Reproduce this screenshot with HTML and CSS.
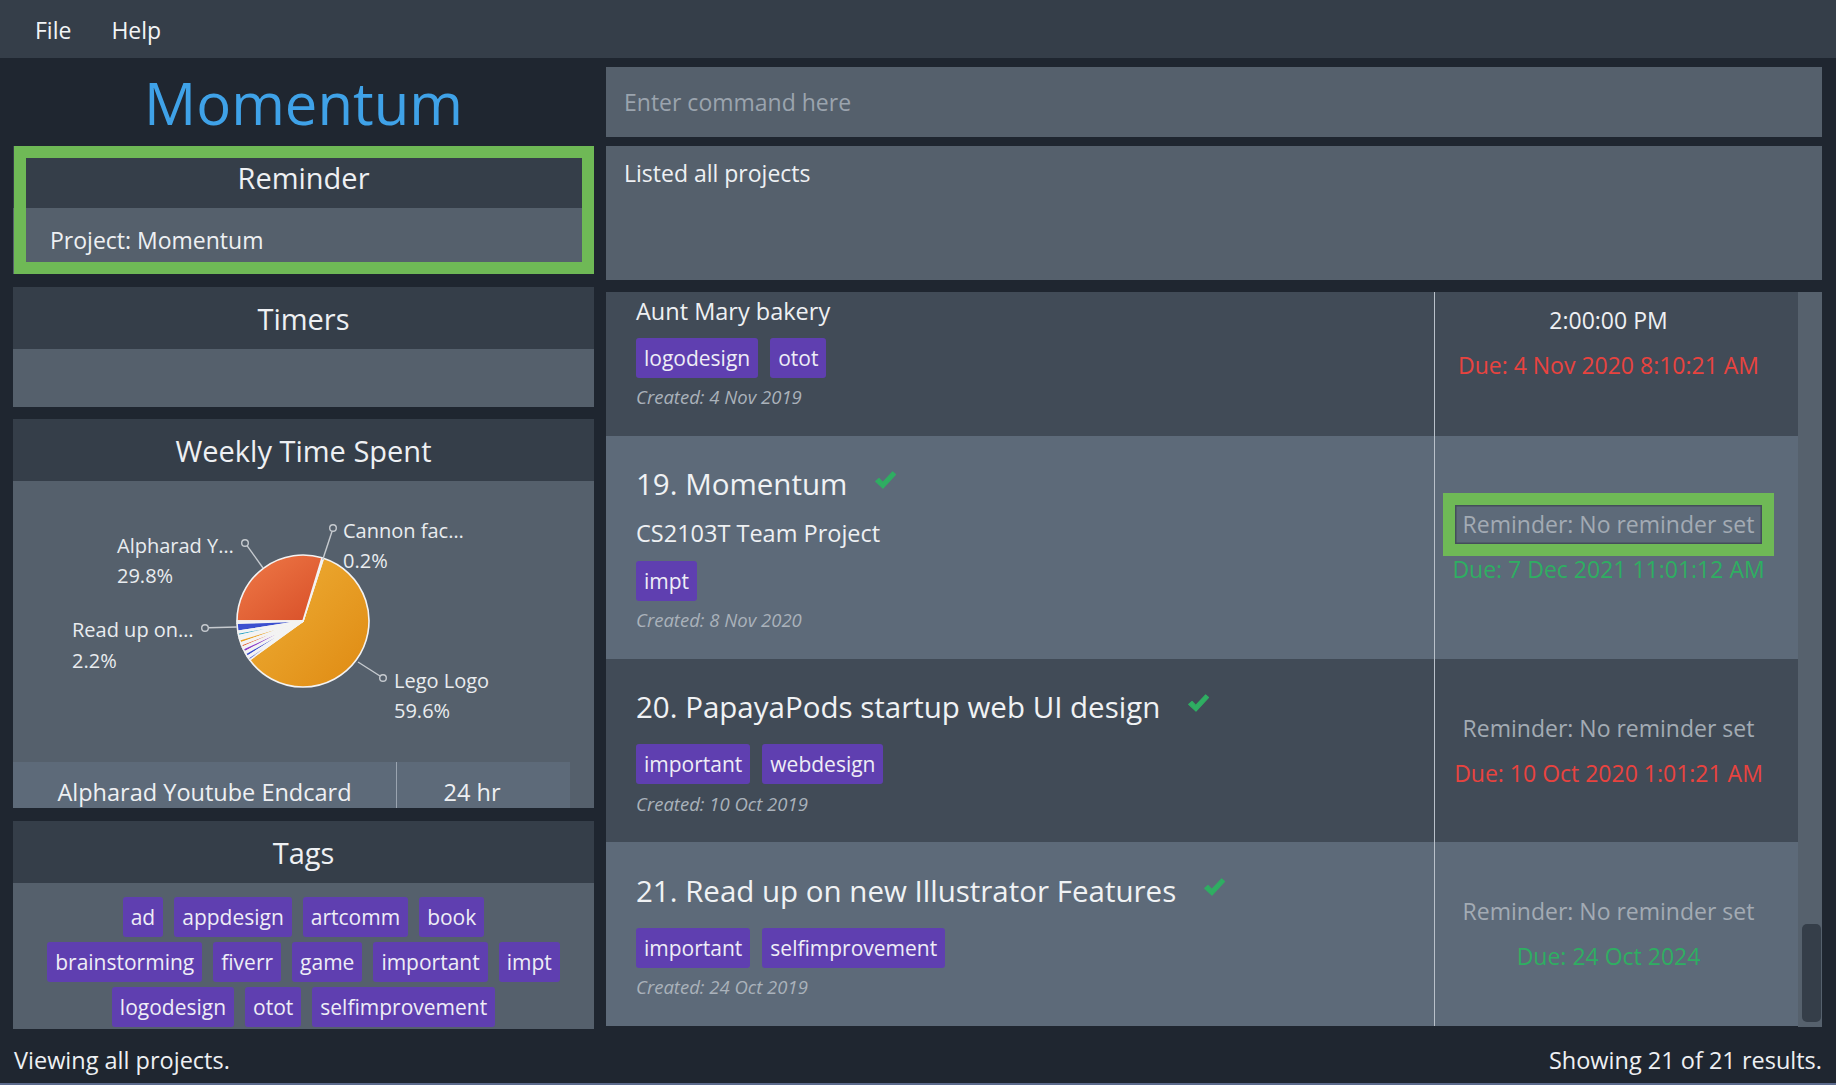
FILE: index.html
```html
<!DOCTYPE html>
<html lang="en">
<head>
<meta charset="utf-8">
<title>Momentum</title>
<link rel="stylesheet" href="styles.css">
</head>
<body>
<div class="app">
  <div class="menubar">
    <span class="menu-item">File</span>
    <span class="menu-item">Help</span>
  </div>

  <div class="main">
    <div class="left">
      <div class="brand">Momentum</div>

      <section class="panel panel-reminder">
        <div class="panel-head">Reminder</div>
        <div class="panel-body reminder-body">Project: Momentum</div>
      </section>

      <section class="panel panel-timers">
        <div class="panel-head">Timers</div>
        <div class="panel-body"></div>
      </section>

      <section class="panel panel-weekly">
        <div class="panel-head">Weekly Time Spent</div>
        <div class="panel-body weekly-body">
          <svg class="pie" width="581" height="281" viewBox="0 0 581 281">
            <defs>
              <linearGradient id="gRed" x1="0" y1="0" x2="1" y2="1">
                <stop offset="0" stop-color="#ef7a48"/>
                <stop offset="1" stop-color="#d84f28"/>
              </linearGradient>
              <linearGradient id="gYel" x1="0" y1="0" x2="1" y2="1">
                <stop offset="0" stop-color="#efb038"/>
                <stop offset="1" stop-color="#df8a12"/>
              </linearGradient>
            </defs>
            <g stroke="#f3f3f3" stroke-width="1.6" stroke-linejoin="round">
              <path fill="url(#gYel)" d="M290 140 L236.60 178.79 A66 66 0 1 0 310.39 77.23 Z"/>
              <path fill="#74c291" d="M290 140 L310.39 77.23 A66 66 0 0 0 309.07 76.82 Z"/>
              <path fill="url(#gRed)" d="M290 140 L309.07 76.82 A66 66 0 0 0 224 140 Z"/>
              <path fill="#dfe3ea" d="M290 140 L224 140 A66 66 0 0 0 224.04 142.30 Z"/>
              <path fill="#3b4fcf" d="M290 140 L224.04 142.30 A66 66 0 0 0 224.81 150.32 Z"/>
              <path fill="#e6e9f2" d="M290 140 L224.81 150.32 A66 66 0 0 0 225.11 152.03 Z"/>
              <path fill="#2ba3c4" d="M290 140 L225.11 152.03 A66 66 0 0 0 225.69 154.85 Z"/>
              <path fill="#dcefef" d="M290 140 L225.69 154.85 A66 66 0 0 0 226.25 157.08 Z"/>
              <path fill="#f1e1b2" d="M290 140 L226.25 157.08 A66 66 0 0 0 226.72 158.75 Z"/>
              <path fill="#e9a021" d="M290 140 L226.72 158.75 A66 66 0 0 0 227.79 162.03 Z"/>
              <path fill="#efe6e0" d="M290 140 L227.79 162.03 A66 66 0 0 0 228.38 163.65 Z"/>
              <path fill="#e05a2b" d="M290 140 L228.38 163.65 A66 66 0 0 0 229.47 166.32 Z"/>
              <path fill="#ece2f0" d="M290 140 L229.47 166.32 A66 66 0 0 0 230.18 167.89 Z"/>
              <path fill="#8a3ac8" d="M290 140 L230.18 167.89 A66 66 0 0 0 231.73 170.99 Z"/>
              <path fill="#d8cdee" d="M290 140 L231.73 170.99 A66 66 0 0 0 232.56 172.50 Z"/>
              <path fill="#3a4ccc" d="M290 140 L232.56 172.50 A66 66 0 0 0 234.34 175.46 Z"/>
              <path fill="#e2e5f0" d="M290 140 L234.34 175.46 A66 66 0 0 0 235.28 176.91 Z"/>
              <path fill="#4256d2" d="M290 140 L235.28 176.91 A66 66 0 0 0 236.60 178.79 Z"/>
            </g>
            <g class="pie-leaders" fill="none" stroke="#c6cacf" stroke-width="1.4">
              <line x1="309.6" y1="79" x2="319" y2="50.5"/>
              <circle cx="320" cy="47" r="3.3"/>
              <line x1="250" y1="87" x2="234.2" y2="64.8"/>
              <circle cx="232" cy="62" r="3.3"/>
              <line x1="224" y1="146" x2="195.6" y2="146.8"/>
              <circle cx="192" cy="147" r="3.3"/>
              <line x1="345" y1="181" x2="367" y2="195"/>
              <circle cx="370" cy="197" r="3.3"/>
            </g>
            <g class="pie-labels" fill="#e9ecef" font-size="20">
              <text x="330" y="57">Cannon fac…</text>
              <text x="330" y="87">0.2%</text>
              <text x="104" y="72">Alpharad Y…</text>
              <text x="104" y="102">29.8%</text>
              <text x="59" y="156">Read up on…</text>
              <text x="59" y="187">2.2%</text>
              <text x="381" y="207">Lego Logo</text>
              <text x="381" y="237">59.6%</text>
            </g>
          </svg>
          <div class="time-table">
            <div class="tt-row">
              <div class="tt-name">Alpharad Youtube Endcard</div>
              <div class="tt-time">24 hr</div>
            </div>
          </div>
        </div>
      </section>

      <section class="panel panel-tags">
        <div class="panel-head">Tags</div>
        <div class="panel-body tags-body">
          <span class="tag">ad</span>
          <span class="tag">appdesign</span>
          <span class="tag">artcomm</span>
          <span class="tag">book</span>
          <span class="tag">brainstorming</span>
          <span class="tag">fiverr</span>
          <span class="tag">game</span>
          <span class="tag">important</span>
          <span class="tag">impt</span>
          <span class="tag">logodesign</span>
          <span class="tag">otot</span>
          <span class="tag">selfimprovement</span>
        </div>
      </section>
    </div>

    <div class="right">
      <div class="command">Enter command here</div>
      <div class="result">Listed all projects</div>
      <div class="list">
        <div class="cells">
          <div class="cells-inner">
            <div class="cell dark">
              <div class="cell-main">
                <div class="title-row"></div>
                <div class="desc">Aunt Mary bakery</div>
                <div class="tags-row"><span class="tag">logodesign</span><span class="tag">otot</span></div>
                <div class="created">Created: 4 Nov 2019</div>
              </div>
              <div class="cell-side side-wrapped">
                <div class="side-line side-spacer"></div>
                <div class="side-line reminder-set">2:00:00 PM</div>
                <div class="side-line due-over">Due: 4 Nov 2020 8:10:21 AM</div>
              </div>
            </div>

            <div class="cell light">
              <div class="cell-main">
                <div class="title-row"><span class="title">19. Momentum</span><svg class="check" width="23" height="20" viewBox="0 0 21 18"><path d="M1.5 10.2 L4.6 7.6 L8 11.2 L17 1.6 L19.6 4 L8.2 16.4 Z"/></svg></div>
                <div class="desc">CS2103T Team Project</div>
                <div class="tags-row"><span class="tag">impt</span></div>
                <div class="created">Created: 8 Nov 2020</div>
              </div>
              <div class="cell-side">
                <div class="side-line reminder-none highlight">Reminder: No reminder set</div>
                <div class="side-line due-ok">Due: 7 Dec 2021 11:01:12 AM</div>
              </div>
            </div>

            <div class="cell dark">
              <div class="cell-main">
                <div class="title-row"><span class="title">20. PapayaPods startup web UI design</span><svg class="check" width="23" height="20" viewBox="0 0 21 18"><path d="M1.5 10.2 L4.6 7.6 L8 11.2 L17 1.6 L19.6 4 L8.2 16.4 Z"/></svg></div>
                <div class="tags-row"><span class="tag">important</span><span class="tag">webdesign</span></div>
                <div class="created">Created: 10 Oct 2019</div>
              </div>
              <div class="cell-side">
                <div class="side-line reminder-none">Reminder: No reminder set</div>
                <div class="side-line due-over">Due: 10 Oct 2020 1:01:21 AM</div>
              </div>
            </div>

            <div class="cell light">
              <div class="cell-main">
                <div class="title-row"><span class="title">21. Read up on new Illustrator Features</span><svg class="check" width="23" height="20" viewBox="0 0 21 18"><path d="M1.5 10.2 L4.6 7.6 L8 11.2 L17 1.6 L19.6 4 L8.2 16.4 Z"/></svg></div>
                <div class="tags-row"><span class="tag">important</span><span class="tag">selfimprovement</span></div>
                <div class="created">Created: 24 Oct 2019</div>
              </div>
              <div class="cell-side">
                <div class="side-line reminder-none">Reminder: No reminder set</div>
                <div class="side-line due-ok">Due: 24 Oct 2024</div>
              </div>
            </div>
          </div>
        </div>
        <div class="scrollbar"><div class="thumb"></div></div>
      </div>
    </div>
  </div>

  <div class="statusbar">
    <span>Viewing all projects.</span>
    <span>Showing 21 of 21 results.</span>
  </div>
</div>
</body>
</html>
```

FILE: styles.css
```css
* {
  box-sizing: border-box;
  margin: 0;
  padding: 0;
}

html,
body {
  width: 1836px;
  height: 1085px;
  overflow: hidden;
}

body {
  background: #1f2630;
  font-family: "Open Sans", "Noto Sans", sans-serif;
  color: #eef0f3;
}

.app {
  display: flex;
  flex-direction: column;
  height: 1085px;
  border-bottom: 2px solid #5b6a8c;
}

/* ---------- menu bar ---------- */
.menubar {
  height: 58px;
  flex: none;
  background: #353e49;
  display: flex;
  align-items: center;
  gap: 40px;
  padding: 2px 0 0 35px;
  font-size: 23px;
  color: #f2f4f6;
}

/* ---------- main area ---------- */
.main {
  flex: 1;
  min-height: 0;
  display: flex;
  gap: 12px;
  padding: 0 14px 0 13px;
}

.left {
  width: 581px;
  flex: none;
  display: flex;
  flex-direction: column;
}

.brand {
  height: 88px;
  flex: none;
  display: flex;
  align-items: center;
  justify-content: center;
  font-size: 58px;
  color: #3fa2e8;
}

.panel {
  flex: none;
  display: flex;
  flex-direction: column;
  background: #55606c;
  overflow: hidden;
}

.panel-head {
  height: 62px;
  flex: none;
  display: flex;
  align-items: center;
  justify-content: center;
  background: #353e49;
  font-size: 29px;
  color: #eef0f3;
}

.panel-body {
  flex: 1;
  min-height: 0;
}

.panel-reminder {
  height: 128px;
  position: relative;
  overflow: visible;
}

.panel-reminder::after {
  content: "";
  position: absolute;
  left: 1px;
  top: 0;
  right: 0;
  bottom: 0;
  border: 12px solid #6fb956;
}

.reminder-body {
  display: flex;
  align-items: center;
  padding: 0 0 3px 37px;
  font-size: 23px;
}

.panel-timers {
  height: 120px;
  margin-top: 13px;
}

.panel-weekly {
  height: 389px;
  margin-top: 12px;
}

.weekly-body {
  display: flex;
  flex-direction: column;
}

.pie {
  display: block;
  flex: none;
}

.time-table {
  flex: 1;
  min-height: 0;
  width: 557px;
  overflow: hidden;
}

.tt-row {
  height: 60px;
  display: flex;
  background: #5d6a79;
  font-size: 23.5px;
}

.tt-name {
  width: 384px;
  display: flex;
  align-items: center;
  justify-content: center;
  border-right: 1px solid #9aa4b0;
}

.tt-time {
  width: 150px;
  display: flex;
  align-items: center;
  justify-content: center;
}

.panel-tags {
  flex: 1;
  margin-top: 13px;
}

.tags-body {
  display: flex;
  flex-wrap: wrap;
  justify-content: center;
  align-content: flex-start;
  gap: 5px 11px;
  padding: 14px 31px 0;
}

.tag {
  height: 40px;
  display: inline-flex;
  align-items: center;
  padding: 0 8px;
  background: #5f3fb0;
  border-radius: 3px;
  font-size: 21px;
  color: #eeedf6;
  white-space: nowrap;
}

/* ---------- right column ---------- */
.right {
  flex: 1;
  min-width: 0;
  display: flex;
  flex-direction: column;
  padding-top: 9px;
}

.command {
  height: 70px;
  flex: none;
  display: flex;
  align-items: center;
  padding-left: 18px;
  background: #55606c;
  font-size: 23px;
  color: #9ba4ae;
}

.result {
  height: 134px;
  flex: none;
  margin-top: 9px;
  padding: 11px 18px;
  background: #55606c;
  font-size: 23px;
  line-height: 32px;
  color: #eef0f3;
}

.list {
  height: 735px;
  flex: none;
  margin-top: 12px;
  display: flex;
}

.cells {
  flex: 1;
  min-width: 0;
  overflow: hidden;
}

.cells-inner {
  margin-top: -79px;
}

.cell {
  display: flex;
}

.cell.dark {
  background: #414b57;
}

.cell.light {
  background: #5d6a79;
}

.cell-main {
  flex: 1;
  min-width: 0;
  padding: 28.5px 0 26.6px 30px;
}

.title-row {
  height: 40px;
  display: flex;
  align-items: flex-start;
  margin-bottom: 17px;
}

.title {
  font-size: 29.5px;
  line-height: 40px;
  color: #f0f2f4;
  white-space: nowrap;
}

.check {
  margin: 6px 0 0 27px;
  fill: #2fae62;
  stroke: #2fae62;
  stroke-width: 1;
  stroke-linejoin: round;
}

.desc {
  height: 32px;
  margin: -4px 0 11.5px;
  font-size: 23.5px;
  line-height: 32px;
  color: #eef0f3;
}

.tags-row {
  display: flex;
  gap: 12px;
}

.created {
  margin-top: 7.4px;
  font-size: 18.5px;
  line-height: 24px;
  font-style: italic;
  color: #aab2bb;
}

.cell-side {
  width: 364px;
  flex: none;
  display: flex;
  flex-direction: column;
  align-items: center;
  justify-content: center;
  padding-right: 16px;
  border-left: 1px solid #b9c1ca;
  font-size: 23px;
}

.side-wrapped {
  padding-bottom: 8px;
}

.side-line {
  line-height: 45px;
  white-space: nowrap;
}

.side-spacer {
  height: 45px;
}

.reminder-none {
  color: #a3abb4;
}

.reminder-set {
  color: #eef0f3;
}

.due-over {
  color: #e8433f;
}

.due-ok {
  color: #2fae62;
}

.highlight {
  position: relative;
}

.highlight::after {
  content: "";
  position: absolute;
  left: -20px;
  right: -20px;
  top: -9px;
  bottom: -9px;
  border: 12px solid #6fb956;
  box-shadow: inset 0 0 0 1.5px #444e5a;
}

.scrollbar {
  width: 24px;
  flex: none;
  display: flex;
  flex-direction: column;
  justify-content: flex-end;
  padding: 0 1px 5px 4px;
  background: #56616d;
}

.thumb {
  height: 98px;
  background: #353e49;
  border-radius: 5px;
}

/* ---------- status bar ---------- */
.statusbar {
  height: 54px;
  flex: none;
  display: flex;
  align-items: center;
  justify-content: space-between;
  padding: 8px 14px 0;
  font-size: 23.5px;
  color: #eef0f3;
}
```
